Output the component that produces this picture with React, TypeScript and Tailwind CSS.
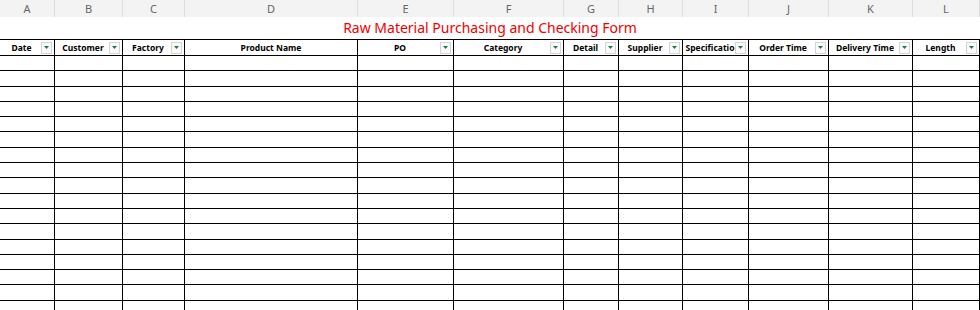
const columns = [
  { letter: 'A', label: 'Date', width: 55 },
  { letter: 'B', label: 'Customer', width: 68 },
  { letter: 'C', label: 'Factory', width: 62 },
  { letter: 'D', label: 'Product Name', width: 173, noFilter: true },
  { letter: 'E', label: 'PO', width: 96 },
  { letter: 'F', label: 'Category', width: 110 },
  { letter: 'G', label: 'Detail', width: 55 },
  { letter: 'H', label: 'Supplier', width: 64 },
  { letter: 'I', label: 'Specificatio', width: 66 },
  { letter: 'J', label: 'Order Time', width: 80 },
  { letter: 'K', label: 'Delivery Time', width: 84 },
  { letter: 'L', label: 'Length', width: 67 },
];

const rows = Array.from({ length: 17 });

const FilterButton = () => (
  <span className="flex h-[12px] w-[11px] shrink-0 items-center justify-center border border-[#d4d4d4] bg-[#fafafa]">
    <svg width="5" height="3" viewBox="0 0 5 3">
      <path d="M0 0 L5 0 L2.5 3 Z" fill="#1e7a46" />
    </svg>
  </span>
);

export default function App() {
  const gridCols = { gridTemplateColumns: columns.map((c) => `${c.width}px`).join(' ') };

  return (
    <div className="h-[310px] w-[980px] overflow-hidden bg-white font-['Noto_Sans',sans-serif]">
      {/* column letters */}
      <div className="grid h-[17px] bg-[#f3f3f3]" style={gridCols}>
        {columns.map((c) => (
          <div
            key={c.letter}
            className="flex items-center justify-center border-r border-[#dedede] text-[11px] leading-[14px] text-[#666]"
          >
            {c.letter}
          </div>
        ))}
      </div>

      {/* title */}
      <div className="flex h-[22px] items-center justify-center text-[14px] leading-[18px] text-[#f00000]">
        Raw Material Purchasing and Checking Form
      </div>

      {/* header row */}
      <div className="grid h-[17px] border-y border-black" style={gridCols}>
        {columns.map((c) => (
          <div key={c.letter} className="flex items-center overflow-hidden border-r border-black pr-[2px]">
            <span className="min-w-0 flex-1 overflow-hidden whitespace-nowrap pl-[2px] text-center text-[8.5px] font-bold leading-[12px] text-black">
              {c.label}
            </span>
            {!c.noFilter && <FilterButton />}
          </div>
        ))}
      </div>

      {/* data rows */}
      {rows.map((_, i) => (
        <div key={i} className="grid h-[15.3px] border-b border-black" style={gridCols}>
          {columns.map((c) => (
            <div key={c.letter} className="border-r border-black" />
          ))}
        </div>
      ))}
    </div>
  );
}
